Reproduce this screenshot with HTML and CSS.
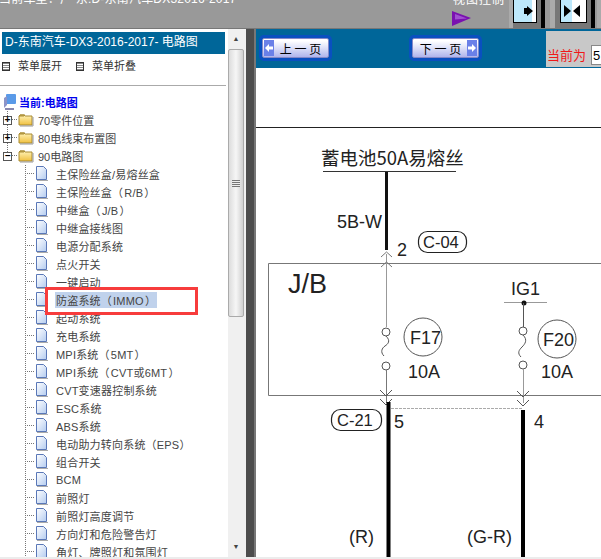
FILE: index.html
```html
<!DOCTYPE html>
<html lang="zh-CN">
<head>
  <meta charset="UTF-8" />
  <title>电路图</title>
  <link rel="stylesheet" href="styles.css">
</head>
<body>

  <svg class="defs" width="0" height="0">
    <defs>
      <linearGradient id="folderFill" x1="0" y1="0" x2="0" y2="1">
        <stop offset="0" stop-color="#fff3b8"/>
        <stop offset="1" stop-color="#f0c040"/>
      </linearGradient>
      <linearGradient id="pageFill" x1="0" y1="0" x2="1" y2="1">
        <stop offset="0" stop-color="#ffffff"/>
        <stop offset="1" stop-color="#b4ccf0"/>
      </linearGradient>
      <symbol id="folder" viewBox="0 0 16 14">
        <path d="M1 3h5l1-1h-5zM1 3v9h13V3H7L6 2H2z" fill="url(#folderFill)" stroke="#a88a30"/>
        <path d="M2 13h13V4" fill="none" stroke="#999"/>
      </symbol>
      <symbol id="page" viewBox="0 0 13 16">
        <path d="M1.500 .5h7l3 3v10h-10z" fill="url(#pageFill)" stroke="#5a78b8"/>
        <path d="M2 14.500h11" stroke="#aaa"/>
      </symbol>
    </defs>
  </svg>

  <header class="topbar">
    <div class="crumb">当前车型：广 东:D-东南汽车DX32016-2017</div>
    <div class="view">
      <div class="view-label">视图控制</div>
      <svg class="view-arrow" width="20" height="16" viewBox="0 0 20 16"><path d="M0 0l19 7L0 15z" fill="#7a10b0"/><path d="M3 3l12 4.500-12 1z" fill="#a050d0"/></svg>
    </div>
    <div class="view-btn"><div class="pane pane-right">
      <svg width="10" height="10" viewBox="0 0 10 10"><path d="M0 2h3V0l6 5-6 5V8H0z"/></svg></div></div>
    <div class="view-btn view-btn-wide"><div class="pane pane-split">
      <svg width="18" height="12" viewBox="0 0 18 12"><path d="M0 0l7 6-7 6zM16 0L9 6l7 6z"/></svg></div></div>
    <div class="view-btn view-btn-last"></div>
  </header>

  <div class="main">
    <aside class="side">
      <div class="side-body">
        <div class="side-title">D-东南汽车-DX3-2016-2017- 电路图</div>
        <div class="menu-row">
          <span class="menu-item"><i class="menu-box"></i>菜单展开</span>
          <span class="menu-item"><i class="menu-box"></i>菜单折叠</span>
        </div>
        <hr class="rule">
        <div class="tree-root">
          <svg width="14" height="16" viewBox="0 0 14 16"><rect x="3" y="0" width="10" height="10" rx="1" fill="#5a9ae8"/><path d="M1 4l3-2v9l-3 3z" fill="#8c94c8"/><path d="M2 14h9v2H2z" fill="#8888b0"/></svg>
          <span>当前:电路图</span>
        </div>
        <ul class="tree">
          <li class="node"><i class="toggle">+</i><svg class="ic-folder"><use href="#folder"/></svg>70零件位置</li>
          <li class="node"><i class="toggle">+</i><svg class="ic-folder"><use href="#folder"/></svg>80电线束布置图</li>
          <li class="node node-last"><i class="toggle">−</i><svg class="ic-folder"><use href="#folder"/></svg>90电路图</li>
        </ul>
        <ul class="tree sub">
          <li class="leaf"><svg class="ic-page"><use href="#page"/></svg>主保险丝盒/易熔丝盒</li>
          <li class="leaf"><svg class="ic-page"><use href="#page"/></svg>主保险丝盒（&#8202;R/B&#8202;）</li>
          <li class="leaf"><svg class="ic-page"><use href="#page"/></svg>中继盒（&#8202;J/B&#8202;）</li>
          <li class="leaf"><svg class="ic-page"><use href="#page"/></svg>中继盒接线图</li>
          <li class="leaf"><svg class="ic-page"><use href="#page"/></svg>电源分配系统</li>
          <li class="leaf"><svg class="ic-page"><use href="#page"/></svg>点火开关</li>
          <li class="leaf"><svg class="ic-page"><use href="#page"/></svg>一键启动</li>
          <li class="leaf"><svg class="ic-page"><use href="#page"/></svg><span class="picked">防盗系统（&#8202;IMMO&#8202;）</span></li>
          <li class="leaf"><svg class="ic-page"><use href="#page"/></svg>起动系统</li>
          <li class="leaf"><svg class="ic-page"><use href="#page"/></svg>充电系统</li>
          <li class="leaf"><svg class="ic-page"><use href="#page"/></svg>MPI系统（&#8202;5MT&#8202;）</li>
          <li class="leaf"><svg class="ic-page"><use href="#page"/></svg>MPI系统（&#8202;CVT或6MT&#8202;）</li>
          <li class="leaf"><svg class="ic-page"><use href="#page"/></svg>CVT变速器控制系统</li>
          <li class="leaf"><svg class="ic-page"><use href="#page"/></svg>ESC系统</li>
          <li class="leaf"><svg class="ic-page"><use href="#page"/></svg>ABS系统</li>
          <li class="leaf"><svg class="ic-page"><use href="#page"/></svg>电动助力转向系统（EPS）</li>
          <li class="leaf"><svg class="ic-page"><use href="#page"/></svg>组合开关</li>
          <li class="leaf"><svg class="ic-page"><use href="#page"/></svg>BCM</li>
          <li class="leaf"><svg class="ic-page"><use href="#page"/></svg>前照灯</li>
          <li class="leaf"><svg class="ic-page"><use href="#page"/></svg>前照灯高度调节</li>
          <li class="leaf"><svg class="ic-page"><use href="#page"/></svg>方向灯和危险警告灯</li>
          <li class="leaf"><svg class="ic-page"><use href="#page"/></svg>角灯、牌照灯和氛围灯</li>
        </ul>
        <div class="red-box"></div>
      </div>
      <div class="scroll">
        <div class="scroll-arrow">▲</div>
        <div class="scroll-thumb"><i></i></div>
        <div class="scroll-arrow scroll-down">▼</div>
      </div>
    </aside>

    <div class="splitter"></div>

    <section class="content">
      <div class="toolbar">
        <div class="pager">
          <button class="page-btn">
            <svg class="page-arrow" width="10" height="16" viewBox="0 0 10 16"><path d="M0 0h10v16H0z" fill="#6a80e8"/><path d="M1 8l4-4v2.500h4v3H5V12z" fill="#fff"/></svg>
            <span>上 一 页</span>
          </button>
          <button class="page-btn page-next">
            <span>下 一 页</span>
            <svg class="page-arrow" width="10" height="16" viewBox="0 0 10 16"><path d="M0 0h10v16H0z" fill="#6a80e8"/><path d="M9 8L5 4v2.500H1v3h4V12z" fill="#fff"/></svg>
          </button>
        </div>
        <div class="current">
          <span>当前为</span>
          <input class="current-input" value="5" readonly>
        </div>
      </div>
      <div class="sheet">
        <svg class="diagram" width="345" height="491" viewBox="256 68 345 491">
          <path d="M256 127.500H601" stroke="#222" stroke-width="1"/>
          <path d="M323 171.500H456" stroke="#333"/>
          <text class="cn" x="321" y="165">蓄电池50A易熔丝</text>
          <path d="M386.500 172V250" stroke="#111" stroke-width="3"/>
          <text class="lb" x="337" y="228">5B-W</text>
          <text class="lb" x="397" y="256">2</text>
          <rect x="418.500" y="231.500" width="48" height="21" rx="9" fill="none" stroke="#222" stroke-width="1.200"/>
          <text class="tag" x="423" y="248">C-04</text>

          <path d="M268.500 263.500H601M268.500 263.500V395.500H601" fill="none" stroke="#777"/>
          <path d="M386.500 254V327" stroke="#999"/>
          <path d="M381 257l5.500-5 5.500 5M381 267l5.500-5 5.500 5" fill="none" stroke="#777"/>
          <text class="big" x="288" y="293">J/B</text>

          <text class="lb" x="511" y="295">IG1</text>
          <path d="M504 302.500H547" stroke="#999"/>
          <circle cx="524" cy="303" r="2.500" fill="#111"/>
          <path d="M523.500 303V327" stroke="#555"/>

          <circle cx="386" cy="332" r="4" fill="#fff" stroke="#555"/>
          <path d="M386 336c5 5 2 8-1 10s-5 6-1 10" fill="none" stroke="#555"/>
          <circle cx="386" cy="366" r="4" fill="#fff" stroke="#555"/>
          <path d="M386.500 370V403" stroke="#777"/>
          <circle cx="423" cy="337" r="19" fill="none" stroke="#555"/>
          <text class="lb" x="410" y="344">F17</text>
          <text class="lb" x="408" y="378">10A</text>

          <circle cx="523" cy="331" r="4" fill="#fff" stroke="#555"/>
          <path d="M523 335c5 5 2 9-1 12s-5 6-1 10" fill="none" stroke="#555"/>
          <circle cx="523" cy="365" r="4" fill="#fff" stroke="#555"/>
          <path d="M523.500 369V403" stroke="#999"/>
          <circle cx="557" cy="339" r="19" fill="none" stroke="#555"/>
          <text class="lb" x="543" y="346">F20</text>
          <text class="lb" x="541" y="378">10A</text>

          <path d="M380 390l6 6 6-6M380 399l6 6 6-6M517 391l6 6 6-6M517 400l6 6 6-6" fill="none" stroke="#555"/>
          <path d="M391 408.500H523" stroke="#aaa" stroke-dasharray="3 1"/>
          <path d="M388.500 402V559" stroke="#000" stroke-width="4"/>
          <path d="M523 410V559" stroke="#000" stroke-width="4"/>
          <rect x="331.500" y="409.500" width="50" height="21" rx="9" fill="none" stroke="#222" stroke-width="1.200"/>
          <text class="tag" x="337" y="426">C-21</text>
          <text class="lb" x="394" y="428">5</text>
          <text class="lb" x="534" y="428">4</text>
          <text class="lb" x="349" y="543">(R)</text>
          <text class="lb" x="467" y="543">(G-R)</text>
        </svg>
      </div>
    </section>
  </div>

</body>
</html>
```

FILE: styles.css
```css
* {
  box-sizing: border-box;
}

html, body {
  height: 100%;
}

body {
  margin: 0;
  overflow: hidden;
  background-color: #ececec;
  font-family: "Liberation Sans", "Noto Sans CJK SC", sans-serif;
  color: #333;
}

.defs {
  display: block;
  height: 0;
}

.topbar {
  display: flex;
  height: 29px;
  background-color: #999;
  border-bottom: 1px solid #777;
  overflow: hidden;
}

.crumb {
  flex: none;
  width: 452px;
  margin-top: -9px;
  margin-left: -1px;
  color: #fff;
  font-size: 12px;
  letter-spacing: 0.2px;
  line-height: 16px;
  white-space: nowrap;
}

.view {
  flex: none;
  width: 58px;
  margin-top: -8px;
  color: #fff;
  font-size: 12px;
  line-height: 16px;
}

.view-label {
  padding-left: 2px;
  letter-spacing: 1px;
  white-space: nowrap;
}

.view-arrow {
  display: block;
  margin: 3px 0 0 1px;
}

.view-btn {
  flex: none;
  width: 36px;
  height: 28px;
  margin-right: 5px;
  padding: 0 4px 0 0;
  background-color: #777;
  border-left: 4px solid #aaa;
  border-right: 4px solid #000;
}

.view-btn-wide {
  width: 45px;
  margin-right: 2px;
  border-left-width: 5px;
  padding-left: 5px;
}

.view-btn-last {
  margin-right: 0;
}

.pane {
  display: flex;
  align-items: center;
  height: 23px;
  border: 1px solid #000;
  border-top: 0;
}

.pane-right {
  padding-left: 10px;
  background: linear-gradient(to right, #bde8fb 83%, #fff 83%);
}

.pane-split {
  padding-left: 3px;
  background: linear-gradient(to right, #bde8fb 45%, #fff 45%);
}

.pane svg {
  display: block;
}

.main {
  display: flex;
  height: 528px;
}

.side {
  display: flex;
  flex: none;
  width: 246px;
  background-color: #f0f0f0;
}

.side-body {
  position: relative;
  width: 228px;
  height: 528px;
  padding: 3px 0 0 2px;
  background-color: #fff;
  overflow: hidden;
}

.side-title {
  width: 223px;
  height: 22px;
  padding-left: 3px;
  background-color: #006699;
  color: #fff;
  font-size: 12px;
  line-height: 21px;
  white-space: nowrap;
}

.menu-row {
  display: flex;
  height: 31px;
  padding-top: 1px;
  font-size: 11px;
  line-height: 16px;
  color: #333;
}

.menu-item {
  display: flex;
  align-items: center;
  height: 22px;
  width: 74px;
}

.menu-box {
  flex: none;
  width: 8px;
  height: 9px;
  margin-right: 8px;
  border: 1px solid #333;
  background: repeating-linear-gradient(#888 0 1px, #fff 1px 2px);
}

.rule {
  width: 226px;
  margin: 0;
  margin-left: -2px;
  border: 0;
  border-top: 1px solid #aaa;
}

.tree-root {
  display: flex;
  align-items: center;
  height: 18px;
  margin-top: 7px;
  padding-left: 1px;
  color: #0000ee;
  font-size: 11px;
  font-weight: bold;
  gap: 2px;
}

.tree {
  margin: 0;
  padding: 0;
  list-style: none;
  font-size: 11px;
  color: #444;
}

.node {
  display: flex;
  align-items: center;
  height: 18px;
  padding-left: 1px;
  white-space: nowrap;
  background:
    repeating-linear-gradient(to right, #777 0 1px, transparent 1px 2px) 10px 8px / 6px 1px no-repeat,
    repeating-linear-gradient(#777 0 1px, transparent 1px 2px) 5px 0 / 1px 100% no-repeat;
}

.node-last {
  background-size: 6px 1px, 1px 50%;
}

.toggle {
  flex: none;
  display: block;
  width: 9px;
  height: 9px;
  margin-right: 6px;
  border: 1px solid #555;
  background-color: #fff;
  color: #000;
  font-family: "Liberation Mono", monospace;
  font-size: 10px;
  font-style: normal;
  font-weight: bold;
  line-height: 7px;
  text-align: center;
}

.ic-folder {
  flex: none;
  width: 16px;
  height: 14px;
  margin-right: 4px;
}

.sub {
  margin-left: 23px;
  background: repeating-linear-gradient(#777 0 1px, transparent 1px 2px) 0 0 / 1px 100% no-repeat;
}

.leaf {
  display: flex;
  align-items: center;
  height: 18px;
  padding-left: 10px;
  letter-spacing: 0.2px;
  white-space: nowrap;
  background: repeating-linear-gradient(to right, #777 0 1px, transparent 1px 2px) 0 8px / 10px 1px no-repeat;
}

.ic-page {
  flex: none;
  width: 13px;
  height: 16px;
  margin-right: 8px;
}

.picked {
  margin-left: -1px;
  padding: 0 1px;
  background-color: #c0d2ec;
}

.red-box {
  position: absolute;
  top: 258px;
  left: 45px;
  width: 153px;
  height: 28px;
  border: 3px solid #f73c3c;
}

.scroll {
  position: relative;
  width: 16px;
  background-color: #f0f0f0;
  color: #444;
}

.scroll-arrow {
  height: 20px;
  font-size: 7px;
  line-height: 20px;
  text-align: center;
}

.scroll-down {
  position: absolute;
  bottom: 0;
  left: 0;
  width: 100%;
}

.scroll-thumb {
  display: flex;
  align-items: center;
  justify-content: center;
  height: 268px;
  background: linear-gradient(to right, #dcdcdc, #f6f6f6 50%, #d0d0d0);
  border: 1px solid #aaa;
  border-radius: 2px;
}

.scroll-thumb i {
  display: block;
  width: 8px;
  height: 7px;
  background: repeating-linear-gradient(#777 0 1px, #eee 1px 2px);
}

.splitter {
  flex: none;
  width: 8px;
  background-color: #4d4d4d;
}

.content {
  flex: 1;
  min-width: 0;
  background-color: #fff;
  border-left: 2px solid #777;
}

.toolbar {
  display: flex;
  justify-content: space-between;
  height: 39px;
  background-color: #006699;
}

.pager {
  display: flex;
  gap: 83px;
  padding: 9px 0 0 6px;
}

.page-btn {
  display: flex;
  align-items: center;
  justify-content: space-between;
  width: 67px;
  height: 20px;
  padding: 0 1px;
  background: linear-gradient(#fff 10%, #dde0f8 50%, #b0b4ec);
  border: 1px solid #8488c8;
  border-radius: 2px;
  box-shadow: 0 0 0 3px #0a50c0;
  color: #000;
  font-family: "Noto Sans CJK SC", sans-serif;
  font-size: 12px;
}

.page-btn span {
  flex: 1;
  text-align: center;
  white-space: nowrap;
}

.page-arrow {
  flex: none;
  display: block;
}

.current {
  display: flex;
  align-items: flex-end;
  width: 55px;
  height: 36px;
  margin-top: 2px;
  padding-bottom: 2px;
  background-color: #c8c8c8;
  color: #f01818;
  font-size: 13px;
  white-space: nowrap;
}

.current span {
  flex: none;
  padding-left: 1px;
  line-height: 18px;
}

.current-input {
  flex: none;
  width: 30px;
  height: 20px;
  margin: 0 0 0 5px;
  padding: 0 1px;
  border: 1px solid #888;
  font-size: 13px;
  color: #000;
}

.sheet {
  height: 489px;
  overflow: hidden;
}

.diagram {
  display: block;
}

.diagram .cn {
  font-family: "Noto Sans CJK SC", sans-serif;
  font-size: 18.500px;
  fill: #222;
}

.diagram .lb {
  font-size: 18px;
  fill: #222;
}

.diagram .tag {
  font-size: 16.500px;
  fill: #222;
}

.diagram .big {
  font-size: 27px;
  fill: #222;
}
```
